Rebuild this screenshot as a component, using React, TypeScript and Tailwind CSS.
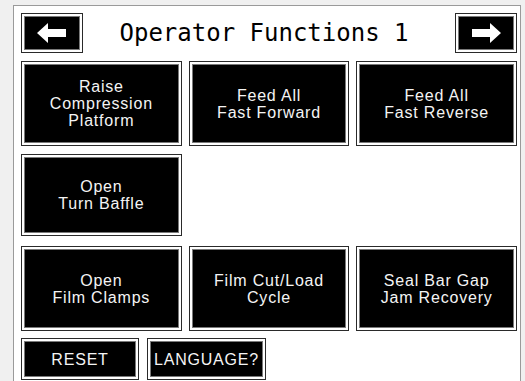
import React from "react";

const Key = ({ lines, className = "" }: { lines: string[]; className?: string }) => (
  <div className={`border border-[#2a2a2a] bg-white p-[2px] ${className}`}>
    <div className="flex h-full flex-col items-center justify-center border border-[#7a7a7a] bg-black text-[16px] leading-[17px] tracking-[0.8px] text-[#f4f4f4]">
      {lines.map((l) => (
        <span key={l}>{l}</span>
      ))}
    </div>
  </div>
);

const Arrow = ({ dir }: { dir: "left" | "right" }) => (
  <svg width="30" height="20" viewBox="0 0 30 20" className={dir === "right" ? "-scale-x-100" : ""}>
    <path d="M0 10 L11 0 L11 6 L29 6 L29 14 L11 14 L11 20 Z" fill="#fff" />
  </svg>
);

const ArrowKey = ({ dir }: { dir: "left" | "right" }) => (
  <div className="h-[40px] w-[62px] border border-[#2a2a2a] bg-white p-[2px]">
    <div className="flex h-full items-center justify-center border border-[#7a7a7a] bg-black">
      <Arrow dir={dir} />
    </div>
  </div>
);

export default function App() {
  return (
    <div className="h-[381px] w-[525px] bg-[#f0f0f0] pl-[13px] pt-[5px] font-['Liberation_Sans',Arial,sans-serif]">
      <div className="h-[376px] w-[508px] border border-b-0 border-[#9a9a9a] bg-white pl-[7px] pr-[3px] pt-[7px]">
        <div className="flex h-[40px] items-center justify-between">
          <ArrowKey dir="left" />
          <div className="mr-[10px] font-['DejaVu_Sans_Mono',monospace] text-[24px] leading-none text-black">
            Operator Functions 1
          </div>
          <ArrowKey dir="right" />
        </div>

        <div className="mt-[8px] grid grid-cols-3 gap-x-[7px]">
          <Key className="h-[85px]" lines={["Raise", "Compression", "Platform"]} />
          <Key className="h-[85px]" lines={["Feed All", "Fast Forward"]} />
          <Key className="h-[85px]" lines={["Feed All", "Fast Reverse"]} />
        </div>

        <div className="mt-[8px] grid grid-cols-3 gap-x-[7px]">
          <Key className="h-[82px]" lines={["Open", "Turn Baffle"]} />
        </div>

        <div className="mt-[10px] grid grid-cols-3 gap-x-[7px]">
          <Key className="h-[85px]" lines={["Open", "Film Clamps"]} />
          <Key className="h-[85px]" lines={["Film Cut/Load", "Cycle"]} />
          <Key className="h-[85px]" lines={["Seal Bar Gap", "Jam Recovery"]} />
        </div>

        <div className="mt-[7px] flex gap-x-[8px]">
          <Key className="h-[42px] w-[118px]" lines={["RESET"]} />
          <Key className="h-[42px] w-[119px]" lines={["LANGUAGE?"]} />
        </div>
      </div>
    </div>
  );
}
